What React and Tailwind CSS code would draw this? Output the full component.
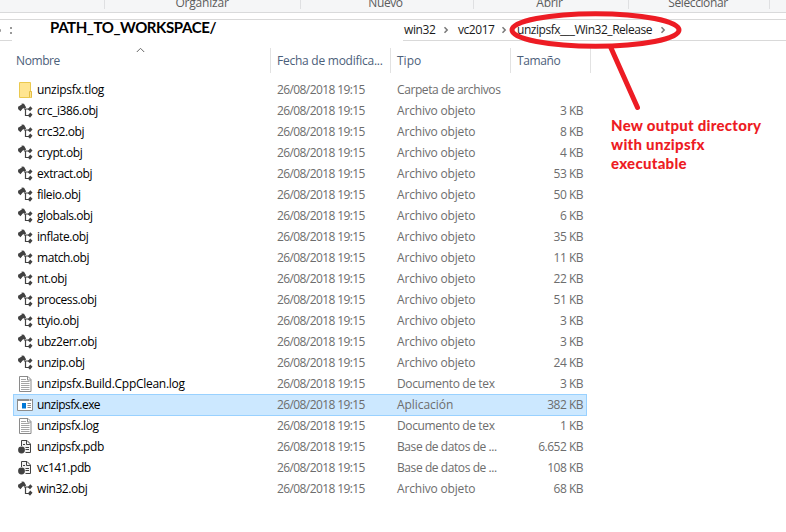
const rows = [
  ["folder", "unzipsfx.tlog", "Carpeta de archivos", ""],
  ["obj", "crc_i386.obj", "Archivo objeto", "3 KB"],
  ["obj", "crc32.obj", "Archivo objeto", "8 KB"],
  ["obj", "crypt.obj", "Archivo objeto", "4 KB"],
  ["obj", "extract.obj", "Archivo objeto", "53 KB"],
  ["obj", "fileio.obj", "Archivo objeto", "50 KB"],
  ["obj", "globals.obj", "Archivo objeto", "6 KB"],
  ["obj", "inflate.obj", "Archivo objeto", "35 KB"],
  ["obj", "match.obj", "Archivo objeto", "11 KB"],
  ["obj", "nt.obj", "Archivo objeto", "22 KB"],
  ["obj", "process.obj", "Archivo objeto", "51 KB"],
  ["obj", "ttyio.obj", "Archivo objeto", "3 KB"],
  ["obj", "ubz2err.obj", "Archivo objeto", "3 KB"],
  ["obj", "unzip.obj", "Archivo objeto", "24 KB"],
  ["log", "unzipsfx.Build.CppClean.log", "Documento de tex", "3 KB"],
  ["exe", "unzipsfx.exe", "Aplicación", "382 KB"],
  ["log", "unzipsfx.log", "Documento de tex", "1 KB"],
  ["pdb", "unzipsfx.pdb", "Base de datos de ...", "6.652 KB"],
  ["pdb", "vc141.pdb", "Base de datos de ...", "108 KB"],
  ["obj", "win32.obj", "Archivo objeto", "68 KB"],
];

const typeTracking = {
  folder: "tracking-[-0.400px]",
  obj: "tracking-[-0.180px]",
  log: "tracking-[-0.360px]",
  exe: "tracking-[-0.050px]",
  pdb: "tracking-[-0.420px]",
};

function nameTracking(kind, name) {
  if (name.length > 20) return "tracking-[-0.270px]";
  if (kind === "folder") return "tracking-[-0.300px]";
  if (kind === "exe") return "tracking-[-0.550px]";
  return "tracking-[-0.420px]";
}

function FileIcon({ kind }) {
  return (
    <svg className="block h-4 w-4 shrink-0" viewBox="0 0 16 16" fill="none">
      {kind === "folder" && (
        <>
          <path d="M2.500 .5h11v8.500l1 1v5.500h-12z" fill="#ffe591" stroke="#ebc94f" />
          <path d="M12.500 15v-5.500h2v6" fill="#ffe591" stroke="#e3bd45" />
        </>
      )}
      {kind === "obj" && (
        <>
          <path d="M2 5.600 6.500 2.800" stroke="#424242" strokeWidth="4" />
          <path d="M4.500 .6 7 .8 9.200 4.500 7 5.700zM1.500 3.500 1 6 3.500 8.300 5.200 6z" fill="#424242" />
          <path d="M7 6h5M8.500 6v6.500H12" stroke="#424242" strokeWidth="1.200" />
          <path d="m13.300 3.300 2.200 2.200-2.500 2.800-2.200-2zM13.300 9.600l2.200 2.200-2.500 2.900-2.200-2.200z" fill="#424242" />
        </>
      )}
      {kind === "log" && (
        <>
          <path d="M2.500 .5h8.500l3 3v12H2.500z" fill="#fff" stroke="#8a8a8a" />
          <path d="M10.500 .5v3.500H14" stroke="#8a8a8a" />
          <path d="M4 3.500h5M4 5.500h8.500M4 7.500h8.500M4 9.500h8.500M4 11.500h8.500M4 13.500h8.500" stroke="#a5a5a5" />
        </>
      )}
      {kind === "exe" && (
        <>
          <path d="M.5 2.500h15v11H.5z" fill="#fff" stroke="#8c8c8c" />
          <path d="M0 2h16v2H0z" fill="#8c8c8c" />
          <path d="M12 3h1M14 3h1" stroke="#fff" />
          <path d="M5 6h4v5.500H5z" fill="#0078d7" />
          <path d="M10.500 6.500H14M10.500 8.500H14M10.500 10.500H14" stroke="#8c8c8c" />
        </>
      )}
      {kind === "pdb" && (
        <>
          <path d="M4.500 7V1.500H10L13.500 5v8.500H8.500" fill="#f2f2f2" stroke="#424242" />
          <path d="M9.500 1.500v4h4" stroke="#424242" />
          <path d="M6 5.500h2M8.500 8.500H12M8.500 10.500H12" stroke="#424242" />
          <circle cx="4.500" cy="11" r="3.400" fill="#424242" />
        </>
      )}
    </svg>
  );
}

function Crumb() {
  return (
    <svg className="block h-2 w-2 shrink-0" viewBox="0 0 8 8" fill="none">
      <path d="m2.500 1.300 2.700 2.700-2.700 2.700" stroke="#777" strokeWidth="1.500" />
    </svg>
  );
}

function Ribbon() {
  const group = "flex h-[9px] shrink-0 items-end justify-center border-r border-[#dfe0e2]";
  return (
    <header className="flex h-[13px] border-b border-[#d9dadb] bg-[#f5f6f7] text-[12px] leading-[12px] text-[#5c5c5c]">
      <div className={group + " w-[105px]"} />
      <div className={group + " w-[196px] pr-px tracking-[-0.200px]"}>Organizar</div>
      <div className={group + " w-[173px] pr-[3px] tracking-[-0.400px]"}>Nuevo</div>
      <div className={group + " w-[155px] pr-[3px] tracking-[-0.300px]"}>Abrir</div>
      <div className={group + " w-[141px] pr-[2px] tracking-[-0.400px]"}>Seleccionar</div>
    </header>
  );
}

function AddressBar() {
  return (
    <div className="mt-[6px] flex h-[22px] border-t border-[#d9d9d9]">
      <div className="flex w-3 shrink-0 items-center justify-between overflow-hidden border-b border-[#d9d9d9]">
        <span className="h-[3px] w-px rounded-r-full bg-[#999]" />
        <span className="flex flex-col gap-[3px]">
          <i className="h-[2px] w-[2px] bg-[#999]" />
          <i className="h-[2px] w-[2px] bg-[#999]" />
        </span>
      </div>
      <div className="w-[391px] shrink-0 pl-[38px] font-['Lato',sans-serif] text-[15px] leading-[14px] font-bold tracking-[-0.400px] text-black">
        PATH_TO_WORKSPACE/
      </div>
      <div className="flex flex-1 items-center border-b border-[#d9d9d9] text-[12px] whitespace-nowrap text-[#1a1a1a]">
        <div className="w-[39px] pl-px tracking-[-0.400px]">win32</div>
        <Crumb />
        <div className="w-[46px] pl-[8px] tracking-[-0.450px]">vc2017</div>
        <div className="w-[4px]" />
        <Crumb />
        <div className="w-[151px] pl-[9px] tracking-[-0.460px]">unzipsfx___Win32_Release</div>
        <Crumb />
      </div>
    </div>
  );
}

function ColumnHeads() {
  const cell = "flex h-[25px] items-center border-r border-[#e2e2e2]";
  return (
    <div className="mt-[7px] flex text-[12px] text-[#4c607a]">
      <div className={cell + " relative w-[271px] pl-4 tracking-[-0.400px]"}>
        Nombre
        <svg className="absolute top-[-1px] left-[136px] h-[6px] w-[9px]" viewBox="0 0 9 6" fill="none">
          <path d="m.8 5 3.700-3.700L8.200 5" stroke="#666" />
        </svg>
      </div>
      <div className={cell + " w-[120px] pl-[6px] tracking-[-0.250px] whitespace-nowrap"}>Fecha de modifica...</div>
      <div className={cell + " w-[120px] pl-[6px]"}>Tipo</div>
      <div className={cell + " w-[80px] pl-[6px] tracking-[-0.400px]"}>Tamaño</div>
    </div>
  );
}

function Row({ row }) {
  const [kind, name, type, size] = row;
  const selected = kind === "exe";
  return (
    <div
      className={
        "ml-[13px] flex w-[574px] items-center border text-[12px] leading-[20px] whitespace-nowrap " +
        (selected ? "-mb-px h-[22px] border-[#99d1ff] bg-[#cce8ff]" : "h-[21px] border-transparent")
      }
    >
      <div className="flex w-[263px] items-center pl-[3px]">
        <FileIcon kind={kind} />
        <span className={"pl-[4px] text-black " + nameTracking(kind, name)}>{name}</span>
      </div>
      <div className="w-[120px] tracking-[-0.600px] text-[#6d6d6d]">26/08/2018 19:15</div>
      <div className={"w-[110px] text-[#6d6d6d] " + typeTracking[kind]}>{type}</div>
      <div className="flex-1 pr-[3px] text-right tracking-[-0.500px] text-[#6d6d6d]">{size}</div>
    </div>
  );
}

export default function App() {
  return (
    <div className="relative h-[532px] w-[786px] overflow-hidden bg-white font-['Open_Sans','Noto_Sans',sans-serif]">
      <Ribbon />
      <AddressBar />
      <ColumnHeads />
      <div className="mt-[6px]">
        {rows.map((row) => (
          <Row key={row[1]} row={row} />
        ))}
      </div>
      <svg className="absolute top-0 left-0 h-[532px] w-[786px]" fill="none" stroke="#ed1c24" strokeWidth="5">
        <ellipse cx="595.500" cy="30" rx="83.500" ry="16.300" />
        <path d="M611 48 637.500 107.500" strokeLinecap="round" />
      </svg>
      <p className="absolute top-[116px] left-[611px] font-['Lato',sans-serif] text-[15px] leading-[19px] font-black tracking-[0.270px] whitespace-nowrap text-[#ed1c24]">
        New output directory
        <br />
        with unzipsfx
        <br />
        executable
      </p>
    </div>
  );
}
